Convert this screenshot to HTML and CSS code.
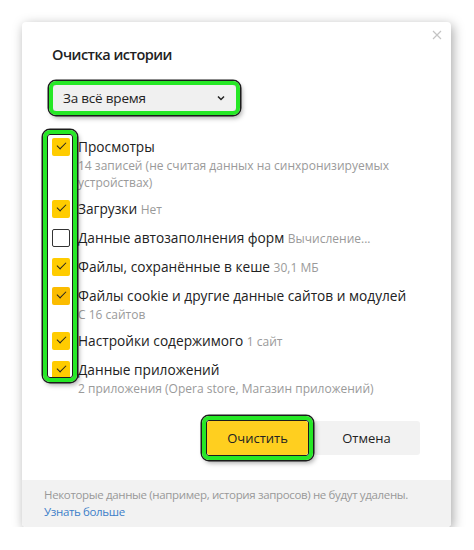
FILE: index.html
```html
<!DOCTYPE html>
<html lang="ru">
<head>
<meta charset="utf-8">
<link rel="stylesheet" href="styles.css">
</head>
<body>
<div class="dialog">
  <div class="body">
    <span class="close">
      <svg width="10" height="10" viewBox="0 0 10 10"><path d="M1 1L9 9M9 1L1 9" stroke="#c4c4c4" stroke-width="1.2" fill="none"/></svg>
    </span>
    <h1 class="title">Очистка истории</h1>
    <div class="hl hl-select">
      <div class="select">
        <span>За всё время</span>
        <svg class="chev" width="8" height="6" viewBox="0 0 8 6"><path d="M1 1.5L4 4.5L7 1.5" stroke="#222" stroke-width="1.5" fill="none"/></svg>
      </div>
    </div>
    <ul class="list">
      <li class="row">
        <span class="cb on"></span>
        <div class="txt">
          <div class="main">Просмотры</div>
          <div class="sub">14 записей (не считая данных на синхронизируемых устройствах)</div>
        </div>
      </li>
      <li class="row">
        <span class="cb on"></span>
        <div class="txt"><div class="main">Загрузки <span class="note">Нет</span></div></div>
      </li>
      <li class="row">
        <span class="cb"></span>
        <div class="txt"><div class="main">Данные автозаполнения форм <span class="note">Вычисление...</span></div></div>
      </li>
      <li class="row">
        <span class="cb on"></span>
        <div class="txt"><div class="main">Файлы, сохранённые в кеше <span class="note">30,1 МБ</span></div></div>
      </li>
      <li class="row">
        <span class="cb on dark"></span>
        <div class="txt">
          <div class="main">Файлы cookie и другие данные сайтов и модулей</div>
          <div class="sub">С 16 сайтов</div>
        </div>
      </li>
      <li class="row">
        <span class="cb on"></span>
        <div class="txt"><div class="main">Настройки содержимого <span class="note">1 сайт</span></div></div>
      </li>
      <li class="row">
        <span class="cb on"></span>
        <div class="txt">
          <div class="main">Данные приложений</div>
          <div class="sub">2 приложения (Opera store, Магазин приложений)</div>
        </div>
      </li>
    </ul>
    <div class="hl-col"></div>
    <div class="actions">
      <div class="hl hl-btn"><button class="btn primary">Очистить</button></div>
      <button class="btn secondary">Отмена</button>
    </div>
  </div>
  <div class="footer">
    <div>Некоторые данные (например, история запросов) не будут удалены.</div>
    <a class="link">Узнать больше</a>
  </div>
</div>
</body>
</html>
```

FILE: styles.css
```css
* { box-sizing: border-box; }
html, body { margin: 0; padding: 0; background: #ffffff; }
body {
  font-family: "Open Sans", "Noto Sans", sans-serif;
  color: #222;
  padding: 22px 23px 0 22px;
}
.dialog {
  width: 429px;
  height: 505px;
  background: #fff;
  border-radius: 4px;
  box-shadow: 2px 3px 12px rgba(0,0,0,0.35);
  display: flex;
  flex-direction: column;
  overflow: hidden;
}
.body {
  position: relative;
  flex: 1;
  padding: 22px 31px 0 30px;
}
.close {
  position: absolute;
  right: 9px;
  top: 8px;
  width: 10px;
  height: 10px;
  display: block;
}
.close svg { display: block; }
.title {
  margin: 0;
  font-size: 14.5px;
  font-weight: 600;
  letter-spacing: -0.5px;
  line-height: 22px;
  color: #222;
}
.hl {
  display: inline-block;
  border: 4px solid #26e826;
  border-radius: 7px;
  box-shadow: 0 0 0 1.5px #1c1c1c, inset 0 0 0 1px #1c1c1c, 2px 3px 5px rgba(0,0,0,0.35);
}
.hl-select {
  margin: 15px 0 0 -3px;
}
.select {
  width: 183px;
  height: 26px;
  background: #f0f0f0;
  border-radius: 3px;
  display: flex;
  align-items: center;
  justify-content: space-between;
  padding: 0 11px 0 10px;
  font-size: 13.5px;
  letter-spacing: -0.2px;
}
.chev { display: block; }
.list {
  list-style: none;
  margin: 22px 0 0 0;
  padding: 0;
  display: flex;
  flex-direction: column;
  gap: 8px;
}
.row {
  display: flex;
  gap: 8px;
  align-items: flex-start;
}
.cb {
  flex: none;
  width: 18px;
  height: 18px;
  margin-top: 1px;
  border-radius: 2px;
  border: 1.5px solid #333;
  background: #fff;
  position: relative;
}
.cb.on {
  border: none;
  background: #ffcc00;
}
.cb.on.dark { background: #fbbc00; }
.cb.on::after {
  content: "";
  position: absolute;
  left: 5px;
  top: 4px;
  width: 8px;
  height: 4px;
  border-left: 1.6px solid #222;
  border-bottom: 1.6px solid #222;
  transform: rotate(-45deg);
}
.main {
  font-size: 13.7px;
  line-height: 20px;
  color: #222;
}
.note, .sub {
  font-size: 12px;
  color: #9a9a9a;
}
.sub {
  line-height: 17px;
}
.hl-col {
  position: absolute;
  left: 21px;
  top: 108px;
  width: 34px;
  height: 252px;
  border: 4px solid #26e826;
  border-radius: 7px;
  box-shadow: 0 0 0 1.5px #1c1c1c, inset 0 0 0 1px #1c1c1c, 2px 3px 5px rgba(0,0,0,0.35);
}
.actions {
  display: flex;
  justify-content: flex-end;
  align-items: center;
  gap: 0;
  margin-top: 19px;
}
.hl-btn { padding: 1px; position: relative; z-index: 1; }
.btn {
  font-family: inherit;
  font-size: 13px;
  height: 34px;
  border: none;
  border-radius: 3px;
  color: #222;
  display: block;
}
.primary { width: 101px; background: #ffcf1f; }
.secondary { width: 107px; background: #f2f2f2; }
.footer {
  height: 47px;
  background: #f2f2f2;
  padding: 6px 6px 0 22px;
  font-size: 11.5px;
  letter-spacing: -0.35px;
  line-height: 17px;
  color: #999;
}
.footer div { white-space: nowrap; }
.link { color: #3d7fc9; }
```
